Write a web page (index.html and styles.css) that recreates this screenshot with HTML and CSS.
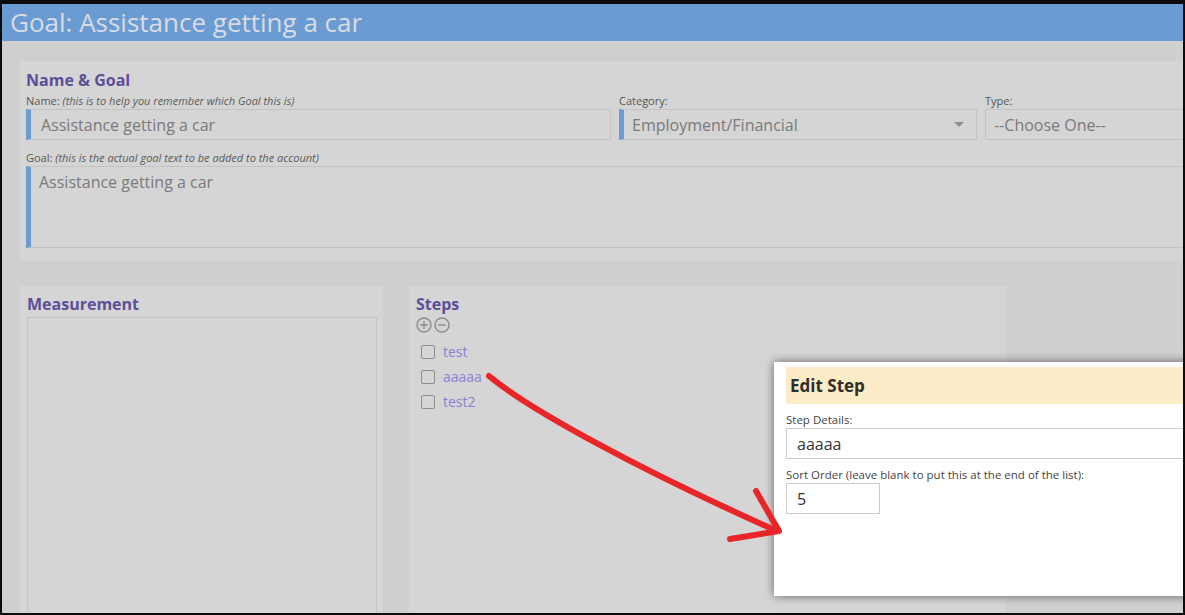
FILE: index.html
```html
<!DOCTYPE html>
<html lang="en">
<head>
    <meta charset="UTF-8">
    <title>Goal: Assistance getting a car</title>
    <link rel="stylesheet" href="styles.css">
</head>
<body>
    <div class="screen">
        <header class="page-title">Goal: Assistance getting a car</header>

        <main class="content">
            <section class="panel panel-goal">
                <h3 class="panel-title">Name &amp; Goal</h3>
                <div class="field-row">
                    <div class="field field-name">
                        <label>Name: <em>(this is to help you remember which Goal this is)</em></label>
                        <input class="input required" type="text" value="Assistance getting a car">
                    </div>
                    <div class="field field-category">
                        <label>Category:</label>
                        <div class="select required">
                            <span>Employment/Financial</span>
                            <span class="caret"></span>
                        </div>
                    </div>
                    <div class="field field-type">
                        <label>Type:</label>
                        <div class="select">
                            <span>--Choose One--</span>
                            <span class="caret"></span>
                        </div>
                    </div>
                </div>
                <div class="field field-goal">
                    <label>Goal: <em>(this is the actual goal text to be added to the account)</em></label>
                    <textarea class="input required goal-text">Assistance getting a car</textarea>
                </div>
            </section>

            <div class="panel-row">
                <section class="panel panel-measure">
                    <h3 class="panel-title">Measurement</h3>
                    <div class="measure-box"></div>
                </section>

                <section class="panel panel-steps">
                    <h3 class="panel-title">Steps</h3>
                    <div class="step-tools">
                        <svg width="16" height="16" viewBox="0 0 16 16">
                            <circle cx="8" cy="8" r="7" fill="none" stroke="#8d8d8d" stroke-width="1.4"/>
                            <path d="M8 4v8M4 8h8" stroke="#8d8d8d" stroke-width="1.4"/>
                        </svg>
                        <svg width="16" height="16" viewBox="0 0 16 16">
                            <circle cx="8" cy="8" r="7" fill="none" stroke="#8d8d8d" stroke-width="1.4"/>
                            <path d="M4 8h8" stroke="#8d8d8d" stroke-width="1.4"/>
                        </svg>
                    </div>
                    <ul class="step-list">
                        <li><span class="check"></span><a href="#">test</a></li>
                        <li><span class="check"></span><a href="#">aaaaa</a></li>
                        <li><span class="check"></span><a href="#">test2</a></li>
                    </ul>
                </section>
            </div>
        </main>

        <div class="modal">
            <div class="modal-head">Edit Step</div>
            <label class="modal-label">Step Details:</label>
            <input class="modal-input" type="text" value="aaaaa">
            <label class="modal-label">Sort Order (leave blank to put this at the end of the list):</label>
            <input class="modal-input sort-input" type="text" value="5">
        </div>

        <!-- red marker arrow from the step to the dialog -->
        <svg class="annotation" viewBox="2 4 1181 609" width="1181" height="609">
            <path d="M489 376 C530 410 640 470 777 531" fill="none" stroke="#e8262a" stroke-width="6" stroke-linecap="round"/>
            <path d="M756 491 L779 531 L730 539" fill="none" stroke="#e8262a" stroke-width="6" stroke-linecap="round" stroke-linejoin="round"/>
        </svg>
    </div>
</body>
</html>
```

FILE: styles.css
```css
body {
    margin: 0;
    background: #0c0c0c;
    font-family: 'Open Sans', 'Noto Sans', sans-serif;
}

.screen {
    position: relative;
    margin: 4px 2px 0 2px;
    height: 609px;
    overflow: hidden;
    background: #cfcfcf;
}

.page-title {
    height: 37px;
    padding-left: 8px;
    background: #6a9bd2;
    color: #d8dce2;
    font-size: 26px;
    line-height: 36px;
    white-space: nowrap;
}

.content {
    padding: 20px 0 0 18px;
}

.panel {
    background: #d5d5d5;
    box-sizing: border-box;
}

.panel-title {
    margin: 0;
    font-size: 16px;
    line-height: 22px;
    font-weight: 700;
    color: #5d4f98;
}

/* Name & Goal */
.panel-goal {
    width: 1200px;
    padding: 8px 0 13px 6px;
}

.field-row {
    display: flex;
    gap: 8px;
}

.field {
    display: flex;
    flex-direction: column;
}

.field-goal {
    margin-top: 8px;
}

.field label {
    font-size: 11px;
    line-height: 17px;
    color: #555;
    padding-top: 1px;
}

.field label em {
    color: #5a5a5a;
}

.field-name { width: 585px; }
.field-category { width: 358px; }
.field-type { width: 230px; }

.input,
.select {
    box-sizing: border-box;
    height: 31px;
    margin: 0;
    padding: 0 10px;
    border: 1px solid #c3c3c3;
    background: #d5d5d5;
    color: #7a7a7a;
    font-family: inherit;
    font-size: 16px;
}

.required {
    border-left: 5px solid #6b9bd2;
}

.select {
    display: flex;
    align-items: center;
    justify-content: space-between;
    padding-left: 8px;
}

.caret {
    width: 0;
    height: 0;
    margin-right: 2px;
    border-left: 5px solid transparent;
    border-right: 5px solid transparent;
    border-top: 5px solid #8e8e8e;
}

.goal-text {
    height: 82px;
    padding: 4px 8px;
    resize: none;
    line-height: 22px;
}

/* Measurement and Steps */
.panel-row {
    display: flex;
    gap: 26px;
    margin-top: 25px;
}

.panel-measure {
    width: 363px;
    height: 340px;
    padding: 7px 6px 0 7px;
}

.measure-box {
    margin-top: 2px;
    height: 320px;
    border: 1px solid #c4c4c4;
}

.panel-steps {
    width: 597px;
    height: 340px;
    padding: 7px 7px 0 7px;
}

.step-tools {
    display: flex;
    gap: 2px;
    height: 16px;
    margin-top: 2px;
}

.step-list {
    list-style: none;
    margin: 6px 0 0 5px;
    padding: 0;
}

.step-list li {
    display: flex;
    align-items: center;
    height: 25px;
}

.check {
    box-sizing: border-box;
    width: 14px;
    height: 14px;
    border: 1px solid #8e8e8e;
    border-radius: 2px;
    margin-right: 8px;
}

.step-list a {
    color: #8b7fd6;
    font-size: 14px;
    text-decoration: none;
}

/* Edit Step dialog */
.modal {
    position: absolute;
    left: 772px;
    top: 358px;
    width: 440px;
    height: 234px;
    padding: 5px 0 0 12px;
    box-sizing: border-box;
    background: #fff;
    box-shadow: 0 0 9px rgba(0, 0, 0, 0.55);
    display: flex;
    flex-direction: column;
    align-items: flex-start;
}

.modal-head {
    align-self: stretch;
    height: 37px;
    padding-left: 4px;
    background: #feecc8;
    color: #2e2e2e;
    font-size: 17px;
    font-weight: 700;
    line-height: 37px;
}

.modal-label {
    font-size: 11.5px;
    line-height: 17px;
    color: #444;
    margin-top: 7px;
}

.modal-input {
    box-sizing: border-box;
    width: 420px;
    height: 31px;
    margin: 0;
    padding: 0 10px;
    border: 1px solid #cccccc;
    color: #333;
    font-family: inherit;
    font-size: 16px;
}

.sort-input {
    width: 94px;
}

.annotation {
    position: absolute;
    left: 0;
    top: 0;
    pointer-events: none;
}
```
